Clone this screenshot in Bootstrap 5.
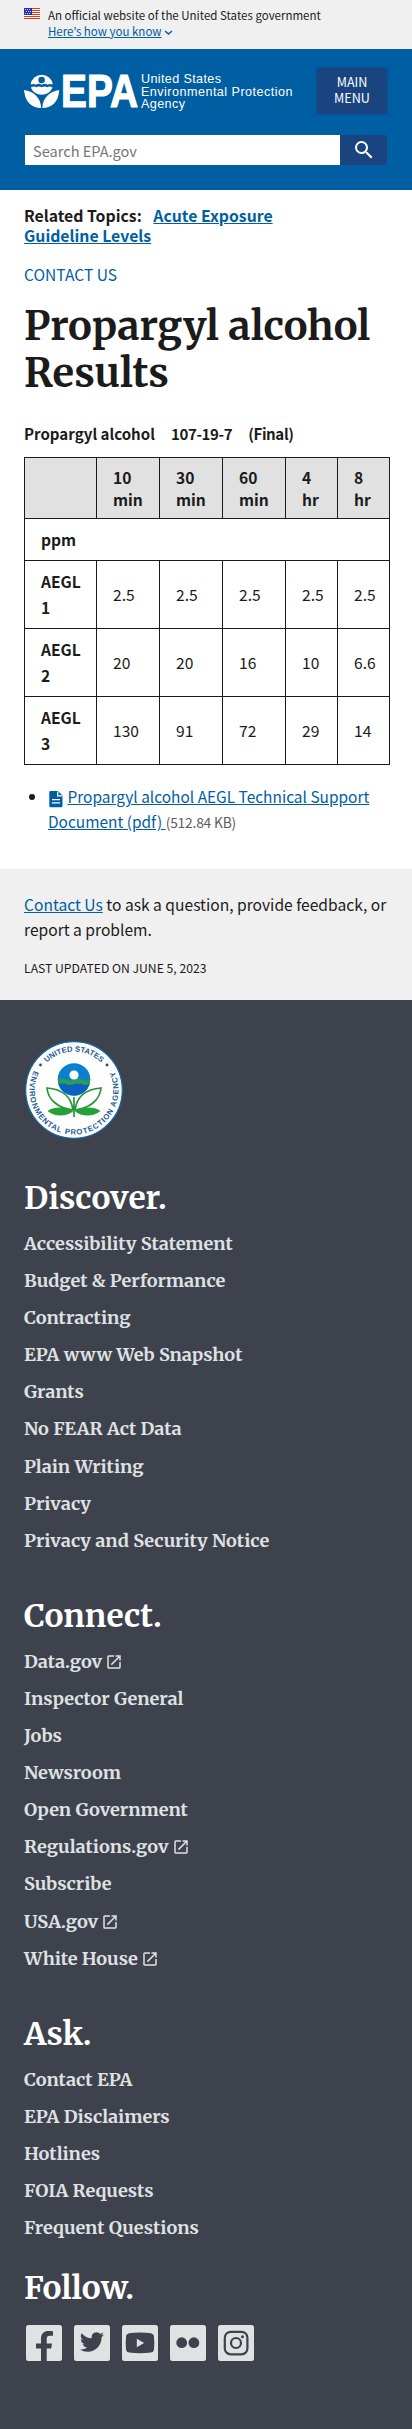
<!DOCTYPE html>
<html lang="en">
<head>
<meta charset="utf-8">
<meta name="viewport" content="width=device-width, initial-scale=1">
<title>Propargyl alcohol Results | US EPA</title>
<link href="https://cdn.jsdelivr.net/npm/bootstrap@5.3.0/dist/css/bootstrap.min.css" rel="stylesheet">
<style>
body{font-family:"Noto Sans CJK KR","Open Sans",sans-serif;font-size:15.6px;line-height:25px;color:#1b1b1b;background:#fff;overflow-x:hidden}
a{color:#005ea2;text-underline-offset:1px}
h1,h2{font-family:Merriweather,"DejaVu Serif Condensed",serif;font-weight:700;margin:0}
.gutter{padding-left:24px;padding-right:24px}
.gov-banner{background:#f0f0f0;height:49px;padding-top:7px;font-size:11.5px;line-height:16px}
.gov-banner .flag{margin:1px 8px 0 0}
.site-head{background:#005ea2;height:141px;padding-top:19px}
.site-head svg{overflow:visible}
.menu-btn{width:70px;height:46px;margin:0 1px 1px 0;border-radius:3px;background:#1a4480;color:#fff;font-size:12.6px;line-height:16px;padding:0 0 2px;border:0;box-shadow:0 0 3px #1a4480}
.search{margin:20px 1px 0}
.search input{height:30px;border:0;border-radius:0;padding:0 8px;font-size:14.57px;color:#1b1b1b}
.search input::placeholder{color:#757575;opacity:1}
.search button{width:47px;height:30px;border-radius:0 3px 3px 0;background:#1a4480;padding:0;border:0;color:#fff}
.topics{padding-top:16px;font-size:15.8px;line-height:20px;font-weight:700}
.contact{margin-top:18px;line-height:20px}
h1{font-size:39.85px;line-height:47px;margin-top:19px}
.chem{font-size:15.07px;line-height:20px;font-weight:700;margin-top:27px;gap:16px}
.chem .cas{letter-spacing:-.4px}
.aegl{width:366px;margin:13px 0 0;border-collapse:collapse;table-layout:fixed}
.aegl th,.aegl td{border:1px solid #1b1b1b;padding:8px 16px;line-height:25.5px;vertical-align:middle;text-align:left}
.aegl thead th{background:#e1e1e1;line-height:22px}
.aegl tbody tr:first-child th{padding:7.500px 16px 8px}
.docs{padding-left:24px;margin:19px 0 34px}
.docs a{font-size:15.45px}
.docs .size{font-size:13.8px;color:#5c5c5c;letter-spacing:-.2px}
.feedback{background:#f0f0f0;height:131px;padding-top:23px}
.feedback .updated{font-size:12.18px;line-height:20px;margin-top:16px}
.site-foot{background:#3e424d;height:1429px;padding-top:40px;color:#fff}
.site-foot h2{font-size:31.7px;line-height:38px}
.site-foot nav{margin-top:39px}
.site-foot nav + nav{margin-top:38px}
.site-foot .follow{margin-top:23px}
.site-foot ul{margin:8px 0 0;font-family:Merriweather,"DejaVu Serif Condensed",serif;font-weight:700;font-size:18.1px;line-height:37.1px}
.site-foot ul a{color:#dfe1e2;text-decoration:none}
.site-foot .ext{margin-left:-1px;vertical-align:-3px}
.social{gap:12px;margin:18px 0 0 2px}
</style>
</head>
<body>
<svg width="0" height="0" class="position-absolute" aria-hidden="true">
<symbol id="launch" viewBox="0 0 24 24"><path fill="#dfe1e2" d="M19 19H5V5h7V3H5a2 2 0 0 0-2 2v14a2 2 0 0 0 2 2h14c1.100 0 2-.9 2-2v-7h-2v7zM14 3v2h3.590l-9.830 9.830 1.410 1.410L19 6.410V10h2V3h-7z"/></symbol>
</svg>

<header>
<div class="gov-banner gutter d-flex align-items-start">
  <svg class="flag flex-shrink-0" width="16" height="11" viewBox="0 0 16 11"><path fill="#fff" d="M0 0h16v11H0z"/><path stroke="#db3e1f" d="M0 .5h16M0 2.500h16M0 4.500h16M0 6.500h16M0 8.500h16M0 10.500h16"/><path fill="#1e33b1" d="M0 0h8v7H0z"/><path stroke="#fff" stroke-width=".8" stroke-dasharray="1 1" d="M1 1.500h6M2 3.500h5M1 5.500h6"/></svg>
  <div>An official website of the United States government<br><a href="#">Here’s how you know</a> <svg width="9" height="6" viewBox="0 0 9 6"><path fill="none" stroke="#005ea2" stroke-width="1.500" d="M1 1l3.500 3L8 1"/></svg></div>
</div>
<div class="site-head gutter">
  <div class="d-flex justify-content-between">
    <svg width="272" height="44" viewBox="0 0 272 44" role="img" aria-label="US EPA">
      <g fill="#fff">
        <path d="M6.600 16.500A11.200 11.200 0 0 1 28.800 16.500Q26 15.200 23.500 16.700Q21 15 17.700 16.700Q14.500 15 12 16.700Q9.500 15.200 6.600 16.500z"/>
        <path d="M6.800 19.500Q10 17.800 12.200 19.300Q15 17.800 17.700 19.300Q20.500 17.800 23.200 19.300Q25.500 17.800 28.600 19.500Q25.500 26.500 17.700 26.800Q10 26.500 6.800 19.500z"/>
        <path d="M0 22C9 23.500 16.500 28.500 17.200 40C7 40 1 33.500 0 22z"/>
        <path d="M35.200 22C26.500 23.500 19 28.500 18.200 40C28.500 40 34.500 33.500 35.200 22z"/>
        <circle cx="17.600" cy="12" r="3.300" fill="#005ea2"/>
      </g>
      <text x="37" y="39" font-family="Liberation Sans,sans-serif" font-weight="700" font-size="46.500" fill="#fff" stroke="#fff" stroke-width="1.200" textLength="77" lengthAdjust="spacingAndGlyphs">EPA</text>
      <g font-family="Liberation Sans,sans-serif" font-size="12.600" fill="#fff">
        <text x="117" y="14.500" textLength="80">United States</text>
        <text x="117" y="27.500" textLength="151.500">Environmental Protection</text>
        <text x="117" y="40" textLength="44">Agency</text>
      </g>
    </svg>
    <button class="menu-btn btn text-uppercase">Main<br>Menu</button>
  </div>
  <form class="search d-flex">
    <input class="form-control flex-fill" type="search" placeholder="Search EPA.gov">
    <button class="btn flex-shrink-0 d-flex align-items-center justify-content-center" type="button" aria-label="Search"><svg width="24" height="24" viewBox="0 0 24 24"><path fill="#fff" d="M15.500 14h-.790l-.280-.270A6.471 6.471 0 0 0 16 9.500 6.500 6.500 0 1 0 9.500 16c1.610 0 3.090-.590 4.230-1.570l.270.280v.790l5 4.990L20.490 19l-4.990-5zm-6 0C7.010 14 5 11.990 5 9.500S7.010 5 9.500 5 14 7.010 14 9.500 11.990 14 9.500 14z"/></svg></button>
  </form>
</div>
</header>

<main class="gutter">
  <div class="topics"><span class="me-2">Related Topics:</span> <a href="#">Acute Exposure<br>Guideline Levels</a></div>
  <div class="contact"><a href="#" class="text-uppercase text-decoration-none">Contact Us</a></div>
  <h1>Propargyl alcohol Results</h1>
  <div class="chem d-flex"><span>Propargyl alcohol</span><span class="cas">107-19-7</span><span class="cas">(Final)</span></div>
  <table class="aegl">
    <colgroup><col style="width:72px"><col style="width:63px"><col style="width:63px"><col style="width:63px"><col style="width:52px"><col style="width:52px"></colgroup>
    <thead><tr><th></th><th>10<br>min</th><th>30<br>min</th><th>60<br>min</th><th>4<br>hr</th><th>8<br>hr</th></tr></thead>
    <tbody>
      <tr><th colspan="6">ppm</th></tr>
      <tr><th>AEGL<br>1</th><td>2.5</td><td>2.5</td><td>2.5</td><td>2.5</td><td>2.5</td></tr>
      <tr><th>AEGL<br>2</th><td>20</td><td>20</td><td>16</td><td>10</td><td>6.6</td></tr>
      <tr><th>AEGL<br>3</th><td>130</td><td>91</td><td>72</td><td>29</td><td>14</td></tr>
    </tbody>
  </table>
  <ul class="docs"><li><svg width="16" height="18" viewBox="0 0 16 18"><path fill="#005ea2" d="M2.500 1H10l4.500 4.500V16a1.200 1.200 0 0 1-1.200 1.200H2.500A1.200 1.200 0 0 1 1.300 16V2.200A1.200 1.200 0 0 1 2.500 1z"/><path stroke="#fff" stroke-width="1.300" fill="none" d="M4 9.700h8M4 12.800h8M9.700 1.500v4.300H14"/></svg> <a href="#">Propargyl alcohol AEGL Technical Support<br>Document (pdf) </a><span class="size">(512.84 KB)</span></li></ul>
</main>

<section class="feedback gutter">
  <div class="text-nowrap"><a href="#">Contact Us</a> to ask a question, provide feedback, or<br>report a problem.</div>
  <div class="updated text-uppercase">Last updated on June 5, 2023</div>
</section>

<footer class="site-foot gutter">
  <svg class="d-block" width="100" height="100" viewBox="0 0 100 100" role="img" aria-label="EPA seal">
    <defs><path id="arcTop" d="M11.500 50A38.500 38.500 0 0 1 88.500 50"/><path id="arcBottom" d="M24.500 13.640A44.500 44.500 0 1 0 75.500 13.640"/></defs>
    <circle cx="50" cy="50" r="48.300" fill="#fff" stroke="#0e6cb6" stroke-width="1.200"/>
    <g font-family="Liberation Sans,sans-serif" font-weight="700" fill="#1b5a94" text-anchor="middle">
      <text font-size="7.700"><textPath href="#arcTop" startOffset="50%">UNITED STATES</textPath></text>
      <text font-size="7.700" letter-spacing=".85"><textPath href="#arcBottom" startOffset="50%">ENVIRONMENTAL PROTECTION AGENCY</textPath></text>
    </g>
    <circle cx="16.500" cy="25" r="1.400" fill="#1b4a80"/><circle cx="83" cy="25" r="1.400" fill="#1b4a80"/>
    <circle cx="50" cy="39.500" r="16.300" fill="#0b80d0"/>
    <path fill="#0d5fc0" d="M34.400 44h31.200A16.300 16.300 0 0 1 34.400 44z"/>
    <path fill="#2e9e4a" d="M33.700 39.500Q38 37.500 42 39.500T50 39.500T58 39.500T66.300 39.500L65.600 44Q62 46 58 44T50 44T42 44T34.400 44z"/>
    <circle cx="50" cy="35" r="4.600" fill="#fff"/>
    <g fill="none" stroke="#27963a" stroke-width="1.700"><path d="M49 70C47 56 38 49 23 48C24 60 34 68 49 70zM51 70C53 56 62 49 77 48C76 60 66 68 51 70zM50 57v20"/></g>
    <path fill="#27a03a" d="M23.500 71C31 66 42 67 49.500 71C42 77 31 77 23.500 71zM76.500 71C69 66 58 67 50.500 71C58 77 69 77 76.500 71z"/>
  </svg>
  <nav class="d-block"><h2>Discover.</h2>
    <ul class="list-unstyled"><li><a href="#">Accessibility Statement</a></li><li><a href="#">Budget &amp; Performance</a></li><li><a href="#">Contracting</a></li><li><a href="#">EPA www Web Snapshot</a></li><li><a href="#">Grants</a></li><li><a href="#">No FEAR Act Data</a></li><li><a href="#">Plain Writing</a></li><li><a href="#">Privacy</a></li><li><a href="#">Privacy and Security Notice</a></li></ul></nav>
  <nav class="d-block"><h2>Connect.</h2>
    <ul class="list-unstyled"><li><a href="#">Data.gov <svg class="ext" width="18" height="18"><use href="#launch"/></svg></a></li><li><a href="#">Inspector General</a></li><li><a href="#">Jobs</a></li><li><a href="#">Newsroom</a></li><li><a href="#">Open Government</a></li><li><a href="#">Regulations.gov <svg class="ext" width="18" height="18"><use href="#launch"/></svg></a></li><li><a href="#">Subscribe</a></li><li><a href="#">USA.gov <svg class="ext" width="18" height="18"><use href="#launch"/></svg></a></li><li><a href="#">White House <svg class="ext" width="18" height="18"><use href="#launch"/></svg></a></li></ul></nav>
  <nav class="d-block"><h2>Ask.</h2>
    <ul class="list-unstyled"><li><a href="#">Contact EPA</a></li><li><a href="#">EPA Disclaimers</a></li><li><a href="#">Hotlines</a></li><li><a href="#">FOIA Requests</a></li><li><a href="#">Frequent Questions</a></li></ul></nav>
  <h2 class="follow">Follow.</h2>
  <div class="social d-flex">
    <svg width="36" height="36" viewBox="0 0 36 36"><rect width="36" height="36" rx="2.500" fill="#dfe1e2"/><path fill="#3e424d" d="M15 36V23.500h-5v-5h5V14c0-5.500 3-8 7.500-8 1.700 0 3.300.2 4.500.3v4.500h-3c-2.500 0-3.300 1.200-3.300 3v4.700H26l-.8 5h-4.500V36z"/></svg>
    <svg width="36" height="36" viewBox="0 0 36 36"><rect width="36" height="36" rx="2.500" fill="#dfe1e2"/><path fill="#3e424d" transform="translate(6 5)" d="M23.950 4.570a10 10 0 0 1-2.820.770 4.960 4.960 0 0 0 2.160-2.720c-.950.550-2 .950-3.130 1.180a4.920 4.920 0 0 0-8.380 4.480A13.900 13.900 0 0 1 1.640 3.160a4.920 4.920 0 0 0 1.520 6.570 4.900 4.900 0 0 1-2.230-.610v.060a4.920 4.920 0 0 0 3.950 4.830 5 5 0 0 1-2.210.080 4.940 4.940 0 0 0 4.600 3.420A9.870 9.870 0 0 1 0 19.540a13.990 13.990 0 0 0 7.550 2.210c9.050 0 14-7.500 14-13.980 0-.210 0-.420-.020-.630a9.940 9.940 0 0 0 2.420-2.570z"/></svg>
    <svg width="36" height="36" viewBox="0 0 36 36"><rect width="36" height="36" rx="2.500" fill="#dfe1e2"/><path fill="#3e424d" d="M7 8.200Q18 7 29 8.200Q31.500 8.600 31.900 11Q32.700 18 31.900 25Q31.500 27.200 29 27.600Q18 28.800 7 27.600Q4.500 27.200 4.100 25Q3.300 18 4.100 11Q4.500 8.600 7 8.200z"/><path fill="#dfe1e2" d="M14.800 13.700v8.600l7.400-4.300z"/></svg>
    <svg width="36" height="36" viewBox="0 0 36 36"><rect width="36" height="36" rx="2.500" fill="#dfe1e2"/><circle cx="11.700" cy="17.700" r="5.400" fill="#3e424d"/><circle cx="23.900" cy="17.700" r="5.400" fill="#3e424d"/></svg>
    <svg width="36" height="36" viewBox="0 0 36 36"><rect width="36" height="36" rx="2.500" fill="#dfe1e2"/><rect x="6.800" y="6.800" width="22.600" height="22.600" rx="6" fill="none" stroke="#3e424d" stroke-width="2.200"/><circle cx="18" cy="18" r="5" fill="none" stroke="#3e424d" stroke-width="2.200"/><circle cx="24.500" cy="11.700" r="1.500" fill="#3e424d"/></svg>
  </div>
</footer>
<script src="https://cdn.jsdelivr.net/npm/bootstrap@5.3.0/dist/js/bootstrap.bundle.min.js"></script>
</body>
</html>
